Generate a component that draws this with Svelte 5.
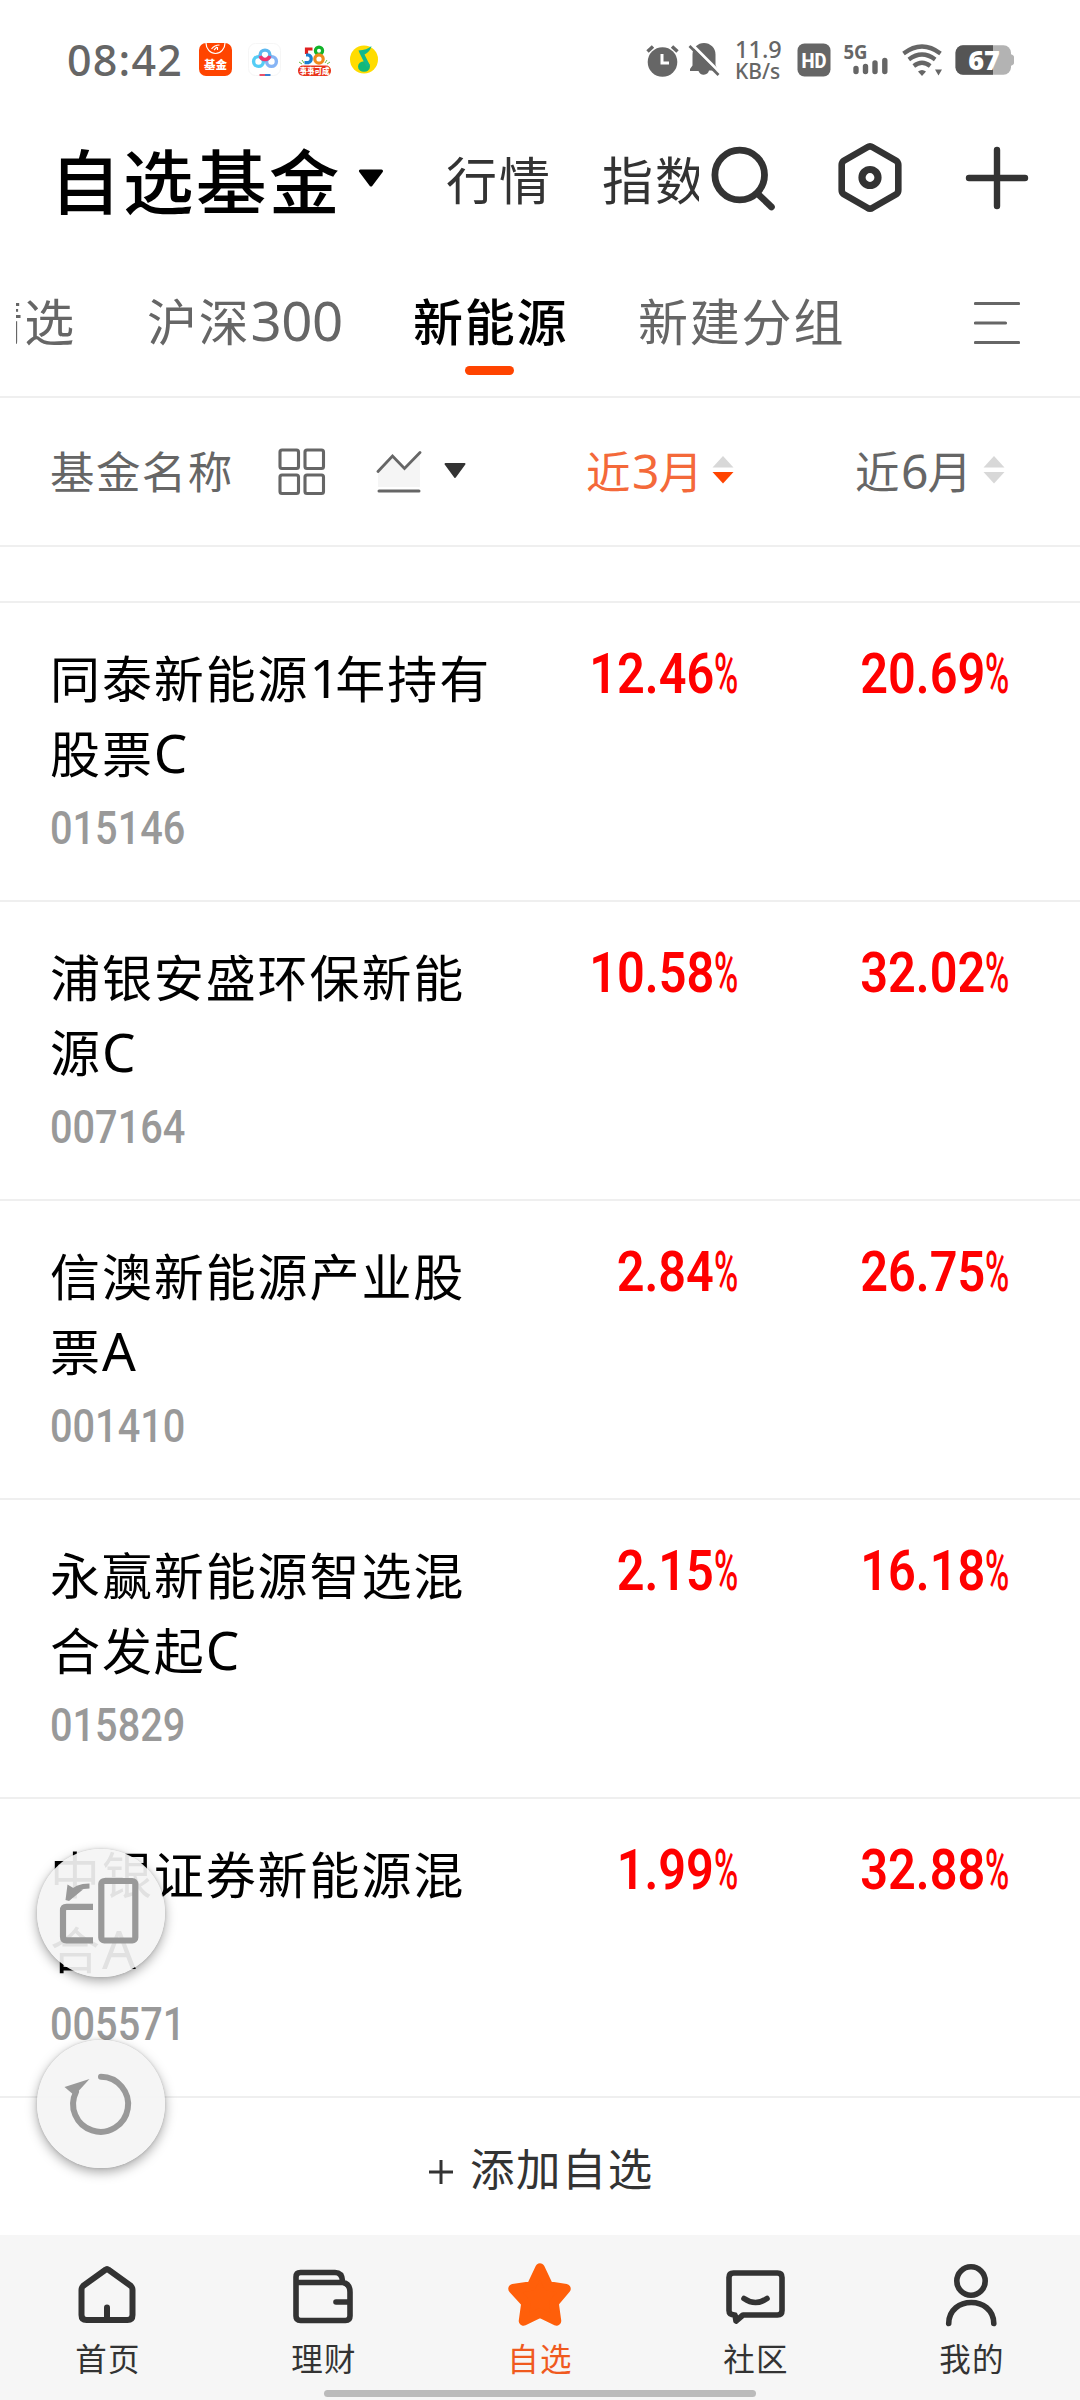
<script>
  const funds = [
    { name: '同泰新能源1年持有股票C', code: '015146', m3: '12.46', m6: '20.69' },
    { name: '浦银安盛环保新能源C', code: '007164', m3: '10.58', m6: '32.02' },
    { name: '信澳新能源产业股票A', code: '001410', m3: '2.84', m6: '26.75' },
    { name: '永赢新能源智选混合发起C', code: '015829', m3: '2.15', m6: '16.18' },
    { name: '中银证券新能源混合A', code: '005571', m3: '1.99', m6: '32.88' }
  ];

  // Latin letters and digits are set in their own face and size.
  const runs = (text) =>
    text
      .split(/([0-9A-Z]+)/)
      .filter(Boolean)
      .map((t) => ({ t, latin: /^[0-9A-Z]/.test(t), one: t === '1' }));
</script>

{#snippet mixed(text)}{#each runs(text) as r}{#if r.latin}<span class="latin" class:one={r.one}>{r.t}</span>{:else}{r.t}{/if}{/each}{/snippet}

{#snippet pct(value)}
  <div class="pct"><span class="num">{value}</span><span class="sign">%</span></div>
{/snippet}

{#snippet sorter(down)}
  <svg class="sorter" width="22" height="28" viewBox="0 0 22 28">
    <path d="M11 0 L21.5 11.5 H.5 Z" fill="#d8d8d8" />
    <path d="M.5 16 H21.5 L11 27.5 Z" fill={down ? '#ff4400' : '#d8d8d8'} />
  </svg>
{/snippet}

<div class="screen">
  <div class="status">
    <span class="time">08:42</span>
    <svg class="apps" width="182" height="36" viewBox="198 43 182 36">
      <rect x="199" y="44" width="33" height="33" rx="7" fill="#ff4400" />
      <path d="M206 44 a9.5 10.5 0 0 0 19 0" fill="none" stroke="#fff" stroke-width="1.2" />
      <path d="M211.5 50 q3-4 8-4 M214 51 l3-3 M217.5 51 v-3" fill="none" stroke="#fff" stroke-width="1.1" />
      <text x="215.5" y="69.5" text-anchor="middle" font-size="11.5" font-weight="900" fill="#fff">基金</text>

      <rect x="248.5" y="44.5" width="32" height="32" rx="7" fill="#fff" stroke="#f6f6f6" />
      <g fill="none" stroke-width="3.4">
        <circle cx="258.5" cy="62.5" r="4.9" stroke="#55cdf5" />
        <circle cx="271.5" cy="62.5" r="4.9" stroke="#86b4f5" />
        <circle cx="265" cy="56" r="4.9" stroke="#5cb8f0" />
        <path d="M260.3 57 a4.9 4.9 0 0 0 9.4 0" stroke="#f0366e" />
      </g>
      <path d="M259.500 76h5.500" stroke="#e8506a" stroke-width="2" />
      <path d="M265 76h5.500" stroke="#3a7fd0" stroke-width="2" />

      <g fill="none" stroke-width="3.2">
        <path d="M312.5 50 H306.500 V55" stroke="#e02020" />
        <path d="M306 56 H308.500 a4 4 0 0 1 0 7.600 H304.500" stroke="#1b7fd0" />
        <circle cx="319" cy="51.800" r="3.600" stroke="#12b32a" />
        <circle cx="319" cy="60" r="4.200" stroke="#f08a1c" />
      </g>
      <path d="M299 63 l3 2 M302 61 l2 3 M327 61 l-2 3 M330 63 l-3 2" stroke="#6bbf4a" stroke-width="1" />
      <rect x="298" y="66.5" width="33" height="10.5" rx="5" fill="#e8351c" />
      <text x="314.5" y="75" text-anchor="middle" font-size="7.500" font-weight="900" fill="#fff">事事可成</text>

      <circle cx="364" cy="60.5" r="14" fill="#ffdc00" />
      <ellipse cx="364" cy="67.5" rx="6" ry="5.300" fill="#12b878" />
      <path d="M358.500 51.500 Q367 51 371.500 47 Q370 53 364.500 55.500 L370 66.500 L366.500 68 L359.500 54 Z" fill="#12b88c" />
    </svg>
    <svg class="sys" width="76" height="38" viewBox="645 41 76 38">
      <circle cx="662.5" cy="62" r="14.8" fill="#666" />
      <path d="M647.5 51.5 L653 46.5 M677.5 51.5 L672 46.5" stroke="#666" stroke-width="3.5" />
      <path d="M662 54 V63 H669" fill="none" stroke="#fff" stroke-width="3" />
      <path d="M704 43 a11.500 11.500 0 0 1 11.500 11.500 V65 L718 70.500 H709 a5.500 5.500 0 0 1 -10.500 0.500 H690 V69 L692.500 65.500 V54.500 A11.500 11.500 0 0 1 704 43 Z" fill="#666" />
      <path d="M691.5 44 L721 73.5" stroke="#fff" stroke-width="3" />
      <path d="M689.5 46 L718.5 75" stroke="#666" stroke-width="2.6" />
    </svg>
    <div class="speed"><span>11.9</span><span>KB/s</span></div>
    <svg class="hd" width="34" height="34" viewBox="0 0 34 34">
      <rect x=".5" y=".5" width="33" height="33" rx="7" fill="#666" />
      <text x="4.5" y="24.5" font-size="21" font-weight="800" fill="#fff" textLength="25" lengthAdjust="spacingAndGlyphs">HD</text>
    </svg>
    <svg class="net" width="46" height="40" viewBox="843 40 46 40">
      <text x="843.5" y="58.5" font-size="19" font-weight="700" fill="#666" textLength="24" lengthAdjust="spacingAndGlyphs">5G</text>
      <path d="M856 68.500V71.500 M865.500 66.500V71.500 M875 63V71.500 M884.800 60.500V71.500" stroke="#666" stroke-width="5.4" stroke-linecap="round" />
    </svg>
    <svg class="wifi" width="42" height="34" viewBox="901 43 42 34">
      <g fill="none" stroke="#666" stroke-width="4.2">
        <path d="M903.500 53.500 Q922 39.500 940.500 53.500" />
        <path d="M908.800 59.500 Q922 49.500 935.200 59.500" />
        <path d="M913.800 66 Q922 59.500 930.200 66" />
      </g>
      <path d="M918 71.500 Q922 68.500 926 71.500 L922 76 Z" fill="#666" />
      <path d="M935 69.500 H942 L938.500 75.500 Z" fill="#666" />
    </svg>
    <svg class="battery" width="60" height="38" viewBox="955 42 60 38">
      <rect x="955.5" y="46.2" width="55.5" height="29.6" rx="7.5" fill="#b3b3b3" />
      <path d="M1010 55 q4 1 4 3 v6 q0 2-4 3z" fill="#b3b3b3" />
      <path d="M993 46.200 H963 a7.500 7.500 0 0 0 -7.500 7.500 V68.300 a7.500 7.500 0 0 0 7.500 7.500 H993 Z" fill="#555" />
      <text x="984" y="70.5" text-anchor="middle" font-size="27" font-weight="800" fill="#fff">67</text>
    </svg>
  </div>

  <header class="top">
    <h1>自选基金</h1>
    <svg class="caret" width="26" height="18" viewBox="0 0 26 18"><path d="M2.5 2 H23.5 L13 16 Z" stroke="#000" stroke-width="3" stroke-linejoin="round" /></svg>
    <span class="link">行情</span>
    <span class="link second">指数</span>
    <svg class="search" width="66" height="66" viewBox="709 144 66 66">
      <circle cx="739.7" cy="174" r="24.8" fill="none" stroke="#333" stroke-width="6.8" />
      <path d="M757.5 192.5 L771.5 206" stroke="#333" stroke-width="6.6" stroke-linecap="round" />
    </svg>
    <svg class="hex" width="66" height="72" viewBox="837 142 66 72">
      <path d="M867.300 147.300 Q870 145.500 872.700 147.300 L896.500 161 Q898.300 162.500 898.300 165 V190 Q898.300 192.500 896.500 194 L872.700 207.700 Q870 209.500 867.300 207.700 L843.500 194 Q841.700 192.500 841.700 190 V165 Q841.700 162.500 843.500 161 Z" fill="none" stroke="#333" stroke-width="6.6" />
      <circle cx="870" cy="177.5" r="8" fill="none" stroke="#333" stroke-width="7.2" />
    </svg>
    <svg class="plus" width="64" height="64" viewBox="0 0 64 64"><path d="M32 4 V60 M4 32 H60" stroke="#333" stroke-width="6.4" stroke-linecap="round" /></svg>
  </header>

  <nav class="tabs">
    <div class="clip"><span>精选</span></div>
    <span class="tab hs">{@render mixed('沪深300')}</span>
    <span class="tab active">新能源</span>
    <span class="tab fresh">新建分组</span>
    <svg class="menu" width="46" height="44" viewBox="0 0 46 44"><path d="M1.5 2.5 H44.5 M1.5 22 H31.5 M1.5 41.5 H44.5" stroke="#666" stroke-width="3.2" stroke-linecap="round" /></svg>
  </nav>

  <div class="columns">
    <span class="col-name">基金名称</span>
    <svg class="grid" width="48" height="48" viewBox="0 0 48 48">
      <g fill="none" stroke="#666" stroke-width="3.1"><rect x="2" y="2" width="18.5" height="18.5" rx="2" /><rect x="27" y="2" width="18.5" height="18.5" rx="2" /><rect x="2" y="27" width="18.5" height="18.5" rx="2" /><rect x="27" y="27" width="18.5" height="18.5" rx="2" /></g>
    </svg>
    <svg class="chart" width="46" height="44" viewBox="0 0 46 44">
      <path d="M2 20.500 L16.500 5 L28.500 17.500 L44 2 V36 H2 Z" fill="#f5f5f5" />
      <path d="M2 20.500 L16.500 5 L28.500 17.500 L44 1.500" fill="none" stroke="#666" stroke-width="2.8" stroke-linecap="round" />
      <path d="M3 40 H43" stroke="#666" stroke-width="3" stroke-linecap="round" />
    </svg>
    <svg class="small-caret" width="24" height="17" viewBox="0 0 24 17"><path d="M2.5 2 H21.5 L12 15 Z" fill="#333" stroke="#333" stroke-width="2" stroke-linejoin="round" /></svg>
    <span class="period on">{@render mixed('近3月')}</span>
    {@render sorter(true)}
    <span class="period six">{@render mixed('近6月')}</span>
    {@render sorter(false)}
  </div>

  <div class="gap"></div>

  {#each funds as f}
    <section class="fund">
      <div class="info">
        <div class="name">{@render mixed(f.name)}</div>
        <div class="code"><span>{f.code}</span></div>
      </div>
      {@render pct(f.m3)}
      {@render pct(f.m6)}
    </section>
  {/each}

  <div class="add">
    <svg width="24" height="24" viewBox="0 0 24 24"><path d="M12 0 V24 M0 12 H24" stroke="#333" stroke-width="3" /></svg>
    <span>添加自选</span>
  </div>

  <footer>
    <div class="item">
      <svg width="72" height="68" viewBox="72 2260 72 68"><g fill="none" stroke="#333" stroke-width="6" stroke-linecap="round" stroke-linejoin="round"><path d="M105.500 2269.800 Q107 2268.500 108.500 2269.800 L131 2286 Q132.500 2287.500 132.500 2290 V2315 Q132.500 2320 127.500 2320 H86.500 Q81.500 2320 81.500 2315 V2290 Q81.500 2287.500 83 2286 Z" /><path d="M107 2307.500 V2319" /></g></svg>
      <span>首页</span>
    </div>
    <div class="item">
      <svg width="72" height="68" viewBox="288 2260 72 68"><g fill="none" stroke="#333" stroke-width="5.6" stroke-linecap="round"><path d="M296 2282.500 H343 Q350 2284 350 2292 V2316 Q350 2320.500 345.500 2320.500 H300.500 Q296 2320.500 296 2316 V2277 Q296 2272.500 300.500 2272.500 H335 Q342 2272.500 342.500 2281" /><path d="M336 2302 H349" /></g></svg>
      <span>理财</span>
    </div>
    <div class="item current">
      <svg width="72" height="68" viewBox="504 2260 72 68"><path d="M540 2268 L548.500 2286 L566 2288.800 L554 2303 L556.500 2321 L540 2313 L523.500 2321 L526 2303 L513 2288.800 L531.500 2286 Z" fill="#ff5f0a" stroke="#ff5f0a" stroke-width="9.5" stroke-linejoin="round" /></svg>
      <span>自选</span>
    </div>
    <div class="item">
      <svg width="72" height="68" viewBox="720 2260 72 68"><g fill="none" stroke="#333" stroke-width="5.6" stroke-linecap="round" stroke-linejoin="round"><path d="M733.500 2273 H777.500 Q782 2273 782 2277.500 V2310.500 Q782 2315 777.500 2315 H743 L736 2321 L735 2315 Q729 2315 729 2310.500 V2277.500 Q729 2273 733.500 2273 Z" /><path d="M744 2298.500 Q755.500 2306.500 767 2298.500" /></g></svg>
      <span>社区</span>
    </div>
    <div class="item">
      <svg width="72" height="68" viewBox="936 2260 72 68"><g fill="none" stroke="#333" stroke-width="5.6" stroke-linecap="round"><circle cx="971" cy="2281" r="14.2" /><path d="M948.700 2323.500 C949 2295.500 993.500 2295.500 993.800 2323.500" /></g></svg>
      <span>我的</span>
    </div>
    <div class="bar"></div>
  </footer>

  <button class="float rotate" aria-label="横屏">
    <svg width="128" height="128" viewBox="37 1849 128 128">
      <g fill="none" stroke="#999" stroke-width="6.2"><rect x="101.3" y="1881" width="34" height="59.5" rx="3" /><path d="M93 1906.800 H66.500 Q63 1906.800 63 1910.500 V1936.500 Q63 1940.300 66.500 1940.300 H93" /><path d="M89.500 1886 Q76 1886 70.500 1894" stroke-width="5" /></g>
      <path d="M67.500 1884.500 L75 1889 L83 1889.500 L69 1901 L65.500 1900 Z" fill="#999" />
    </svg>
  </button>
  <button class="float refresh" aria-label="刷新">
    <svg width="128" height="128" viewBox="37 2040 128 128">
      <path d="M101 2076.800 A27.500 27.500 0 1 1 76 2092" fill="none" stroke="#999" stroke-width="6" stroke-linecap="round" />
      <path d="M64.500 2087 L89.500 2079 L74.500 2095.500 Z" fill="#999" />
    </svg>
  </button>
</div>

<style>
  :global(body) {
    background: #fff;
  }
  .screen {
    position: relative;
    width: 1080px;
    height: 2400px;
    overflow: hidden;
    background: #fff;
    color: #000;
    font-family: 'Noto Sans CJK SC', sans-serif;
    white-space: nowrap;
  }
  svg {
    display: block;
    flex: none;
  }
  .latin {
    font-family: 'Noto Sans', sans-serif;
    line-height: 1;
  }

  .status {
    display: flex;
    align-items: center;
    height: 120px;
    padding-left: 67px;
    color: #666;
    box-sizing: border-box;
  }
  .time {
    width: 131px;
    font: 500 43px/50px 'Noto Sans', sans-serif;
    letter-spacing: 1.2px;
  }
  .sys {
    margin-left: 265px;
  }
  .speed {
    display: flex;
    flex-direction: column;
    width: 46px;
    margin-left: 14px;
    font: 500 23.5px/22px 'Noto Sans', sans-serif;
  }
  .speed span + span {
    font-size: 21px;
  }
  .hd {
    margin-left: 16px;
    font-family: Roboto, sans-serif;
  }
  .net {
    margin-left: 12px;
    font-family: 'Noto Sans', sans-serif;
  }
  .wifi {
    margin-left: 12px;
  }
  .battery {
    margin-left: 12px;
    font-family: 'Open Sans', sans-serif;
  }

  .top {
    display: flex;
    align-items: center;
    height: 115px;
    padding-left: 50px;
  }
  h1 {
    width: 308px;
    margin: 0;
    font-size: 70.5px;
    font-weight: 500;
    line-height: 100px;
    letter-spacing: 2.5px;
  }
  .link {
    width: 107px;
    margin-left: 62px;
    color: #333;
    font-size: 51px;
    line-height: 80px;
    letter-spacing: 2px;
  }
  .link.second {
    width: 97px;
    margin-left: 49px;
    overflow: hidden;
  }
  .search {
    margin-left: 10px;
  }
  .hex {
    margin-left: 62px;
  }
  .plus {
    margin-left: 62px;
  }

  .tabs {
    display: flex;
    align-items: center;
    height: 163px;
    padding-top: 7px;
    padding-left: 16px;
    border-bottom: 2px solid #efefef;
    box-sizing: border-box;
    color: #666;
    font-size: 50px;
    line-height: 70px;
    letter-spacing: 1.8px;
  }
  .clip {
    display: flex;
    justify-content: flex-end;
    width: 60px;
    overflow: hidden;
  }
  .tab {
    position: relative;
  }
  .tab .latin {
    font-size: 54.5px;
    letter-spacing: -0.5px;
  }
  .hs {
    width: 195px;
    margin-left: 71px;
  }
  .active {
    width: 156px;
    margin-left: 71px;
    color: #000;
    font-weight: 500;
  }
  .active::after {
    content: '';
    position: absolute;
    left: 52px;
    bottom: -21px;
    width: 49px;
    height: 9px;
    border-radius: 5px;
    background: #ff4400;
  }
  .fresh {
    width: 208px;
    margin-left: 69px;
  }
  .menu {
    margin-left: 128px;
    margin-top: 8px;
  }

  .columns {
    display: flex;
    align-items: center;
    height: 149px;
    padding-left: 50px;
    border-bottom: 2px solid #efefef;
    box-sizing: border-box;
    color: #666;
    font-size: 44.5px;
    line-height: 64px;
    letter-spacing: 1.4px;
  }
  .col-name {
    width: 186px;
    margin-bottom: 4px;
  }
  .grid {
    margin-left: 42px;
  }
  .chart {
    margin-left: 50px;
    margin-top: 2px;
  }
  .small-caret {
    margin-left: 21px;
    margin-bottom: 2px;
  }
  .period {
    width: 114px;
    margin-left: 119px;
    margin-bottom: 4px;
  }
  .period .latin {
    font-size: 48px;
    letter-spacing: -0.8px;
  }
  .period.on {
    color: #f4693a;
  }
  .period.six {
    margin-left: 121px;
  }
  .sorter {
    margin-left: 12px;
    margin-bottom: 3px;
  }
  .period.six + .sorter {
    margin-left: 14px;
  }

  .gap {
    height: 56px;
    border-bottom: 2px solid #efefef;
    box-sizing: border-box;
  }

  .fund {
    display: grid;
    grid-template-columns: 450px 239px 271px;
    height: 299px;
    padding-left: 50px;
    border-bottom: 2px solid #efefef;
    box-sizing: border-box;
  }
  .info {
    padding-top: 36px;
  }
  .name {
    font-size: 50px;
    line-height: 75px;
    letter-spacing: 1.9px;
    white-space: normal;
  }
  .name .latin {
    font-size: 53px;
    letter-spacing: 0;
  }
  .name .one {
    letter-spacing: -4.5px;
  }
  .code {
    margin-top: 15px;
    color: #999;
    font: 500 45.5px/50px Roboto, sans-serif;
  }
  .code span {
    display: inline-block;
    transform: scaleX(0.872);
    transform-origin: left;
  }
  .pct {
    display: flex;
    justify-content: flex-end;
    height: 60px;
    padding-top: 41px;
    color: #f00;
    font: 600 55px/60px Roboto, sans-serif;
  }
  .num {
    transform: scaleX(0.885);
    transform-origin: right;
  }
  .sign {
    width: 25px;
    font-weight: 500;
    transform: scaleX(0.6);
    transform-origin: left;
  }

  .add {
    display: flex;
    align-items: center;
    height: 137px;
    padding-left: 429px;
    color: #333;
    font-size: 44.5px;
    letter-spacing: 1.4px;
    line-height: 64px;
  }
  .add span {
    margin-left: 17px;
  }
  .add svg {
    margin-top: 10px;
  }

  footer {
    position: relative;
    display: flex;
    height: 165px;
    background: #f6f6f6;
  }
  .item {
    display: flex;
    flex-direction: column;
    align-items: center;
    width: 216px;
    padding-top: 25px;
    color: #333;
    font-size: 31.5px;
    line-height: 44px;
    letter-spacing: 1.3px;
  }
  .item span {
    margin-top: 7px;
  }
  .item.current {
    color: #f05a1e;
  }
  .bar {
    position: absolute;
    left: 324px;
    bottom: 3px;
    width: 432px;
    height: 7px;
    border-radius: 4px;
    background: #bbb;
  }

  .float {
    position: absolute;
    left: 37px;
    width: 128px;
    height: 128px;
    padding: 0;
    border: 0;
    border-radius: 50%;
    background: rgba(244, 244, 244, 0.92);
    box-shadow: 0 4px 12px rgba(0, 0, 0, 0.35), 0 0 3px rgba(0, 0, 0, 0.15);
  }
  .rotate {
    top: 1849px;
  }
  .refresh {
    top: 2040px;
  }
</style>
